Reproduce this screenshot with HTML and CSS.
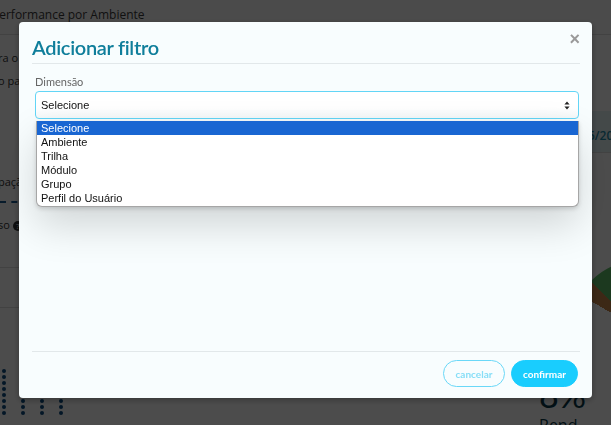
FILE: index.html
```html
<!DOCTYPE html>
<html lang="pt">
<head>
<meta charset="utf-8">
<link rel="stylesheet" href="styles.css">
</head>
<body>
<div class="page">
  <div class="page-head">Performance por Ambiente</div>
  <div class="page-body">
    <div class="left-col">
      <div class="frag f1">ra o</div>
      <div class="frag f2">o pa</div>
      <div class="frag f3">paçã</div>
      <div class="dash"></div>
      <div class="frag f4">so <span class="qmark">?</span></div>
      <div class="hline l1"></div>
      <div class="hline l2"></div>
      <div class="dots">
        <span></span><span></span><span></span><span></span><span></span><span></span><span></span><span></span>
        <span></span><span></span><span></span><span></span><span></span><span></span><span></span><span></span>
        <span></span><span></span><span></span><span></span><span></span><span></span><span></span><span></span>
        <span></span><span></span><span></span><span></span><span></span><span></span><span></span><span></span>
      </div>
    </div>
    <div class="right-col">
      <div class="date-box">5/20</div>
      <div class="pie"></div>
      <div class="pct">8%</div>
      <div class="ren">Rend</div>
    </div>
  </div>
</div>

<div class="overlay">
  <div class="modal">
    <div class="modal-head">
      <h2 class="modal-title">Adicionar filtro</h2>
      <span class="close">&#xD7;</span>
    </div>
    <div class="modal-body">
      <label class="field-label">Dimensão</label>
      <div class="select">
        <span>Selecione</span>
        <svg class="arrows" width="6" height="9" viewBox="0 0 6 9"><path d="M3 0.5 L5.6 3.6 L0.4 3.6 Z M3 8.5 L5.6 5.4 L0.4 5.4 Z" fill="#222"/></svg>
      </div>
      <ul class="options">
        <li class="sel">Selecione</li>
        <li>Ambiente</li>
        <li>Trilha</li>
        <li>Módulo</li>
        <li>Grupo</li>
        <li>Perfil do Usuário</li>
      </ul>
    </div>
    <div class="modal-foot">
      <button class="btn btn-outline">cancelar</button>
      <button class="btn btn-fill">confirmar</button>
    </div>
  </div>
</div>
</body>
</html>
```

FILE: styles.css
```css
* { box-sizing: border-box; }
html, body { margin: 0; padding: 0; }
body {
  width: 611px;
  height: 425px;
  overflow: hidden;
  font-family: "Open Sans", "Liberation Sans", sans-serif;
  background: #fff;
}

/* background page */
.page { width: 611px; height: 425px; background: #fff; overflow: hidden; }
.page-head {
  height: 35px;
  padding: 6px 0 0 0;
  margin-left: -8px;
  font-size: 12px;
  color: #3a3a3a;
  border-bottom: 1px solid #ddd;
  background: #fafafa;
  white-space: nowrap;
}
.page-body { display: flex; justify-content: space-between; height: 390px; }
.left-col { width: 70px; position: relative; font-size: 11px; color: #333; overflow: hidden; white-space: nowrap; }
.frag { position: absolute; left: -2px; }
.f1 { top: 15px; }
.f2 { top: 38px; }
.f3 { top: 139px; }
.f4 { top: 182px; }
.qmark { display: inline-block; width: 10px; height: 10px; border-radius: 50%; background: #333; color: #fff; font-size: 8px; text-align: center; line-height: 10px; }
.dash { position: absolute; top: 166px; left: 0; width: 40px; border-top: 2px dashed #1a5a90; }
.hline { position: absolute; left: 0; width: 60px; border-top: 1px solid #ddd; }
.l1 { top: 232px; }
.l2 { top: 272px; }
.dots { position: absolute; top: 334px; left: 2px; display: grid; grid-template-columns: repeat(4, 5px); gap: 2px 14px; }
.dots span { width: 4px; height: 4px; border-radius: 50%; background: #0a4c80; }

.right-col { width: 60px; position: relative; white-space: nowrap; }
.date-box { position: absolute; top: 76px; left: 0; width: 60px; height: 42px; background: #e3f3f6; color: #1f8aa8; font-size: 12px; font-weight: 600; padding-top: 16px; padding-left: 37px; border-bottom: 1px solid #ddd; }
.pie { position: absolute; top: 225px; left: 20px; width: 140px; height: 140px; border-radius: 50%;
  background: conic-gradient(from 300deg, #c8864a 0 14deg, #5fbf6a 14deg 60deg, transparent 60deg); }
.pct { position: absolute; top: 340px; left: -12px; font-size: 34px; line-height: 40px; color: #083848; font-family: "Lato", sans-serif; }
.ren { position: absolute; top: 381px; left: -12px; font-size: 16px; line-height: 18px; color: #083848; }

/* overlay + modal */
.overlay {
  position: fixed;
  inset: 0;
  background: rgba(0, 0, 0, 0.7);
  padding: 22px 19px 0 19px;
}
.modal {
  width: 573px;
  height: 376px;
  background: #f8fdfe;
  border-radius: 4px;
  padding: 0 12px 0 13px;
  display: flex;
  flex-direction: column;
  box-shadow: 0 2px 6px rgba(0,0,0,0.3);
}
.modal-head {
  display: flex;
  justify-content: space-between;
  align-items: flex-start;
  height: 42px;
  border-bottom: 1px solid #e2e8ea;
}
.modal-title {
  margin: 13px 0 0 0;
  font-family: "Lato", "Open Sans", sans-serif;
  font-weight: 600;
  font-size: 20px;
  color: #0f7e9b;
  letter-spacing: -0.3px;
}
.close {
  margin-top: 8px;
  margin-right: 0;
  font-size: 18px;
  line-height: 18px;
  font-weight: 700;
  color: #9a9a9a;
  font-family: "Liberation Sans", sans-serif;
}
.modal-body {
  flex: 1;
  padding: 11px 1px 0 3px;
  position: relative;
}
.field-label {
  display: block;
  font-family: "Lato", sans-serif;
  font-size: 11px;
  color: #666;
  margin-bottom: 3px;
}
.select {
  height: 28px;
  border: 1px solid #62d5f6;
  border-radius: 4px;
  background: linear-gradient(#fff 60%, #f4f8f9);
  display: flex;
  align-items: center;
  justify-content: space-between;
  padding: 0 8px 0 5px;
  font-family: "Liberation Sans", Arial, sans-serif;
  font-size: 11px;
  color: #111;
}
.options {
  list-style: none;
  margin: 2px 0 0 1px;
  padding: 0;
  background: #fff;
  border: 1px solid #a6a6a6;
  border-top: none;
  border-radius: 0 0 6px 6px;
  font-family: "Liberation Sans", Arial, sans-serif;
  font-size: 11px;
  color: #111;
  box-shadow: 0 18px 40px rgba(0,0,0,0.16), 0 2px 4px rgba(0,0,0,0.15);
}
.options li { height: 14px; line-height: 14px; padding-left: 4px; }
.options li:last-child { height: 15px; }
.options li.sel { background: #1966d2; color: #fff; }
.modal-foot {
  height: 47px;
  border-top: 1px solid #e2e8ea;
  display: flex;
  justify-content: flex-end;
  align-items: flex-start;
  gap: 6px;
  padding: 8px 2px 0 0;
}
.btn {
  height: 27px;
  border-radius: 14px;
  font-family: "Lato", sans-serif;
  font-weight: 700;
  font-size: 10px;
  cursor: pointer;
}
.btn-outline { width: 62px; background: transparent; border: 1px solid #6ad8f8; color: #86def7; }
.btn-fill { width: 67px; background: #19cdfe; border: 1px solid #19cdfe; color: #fff; }
```
